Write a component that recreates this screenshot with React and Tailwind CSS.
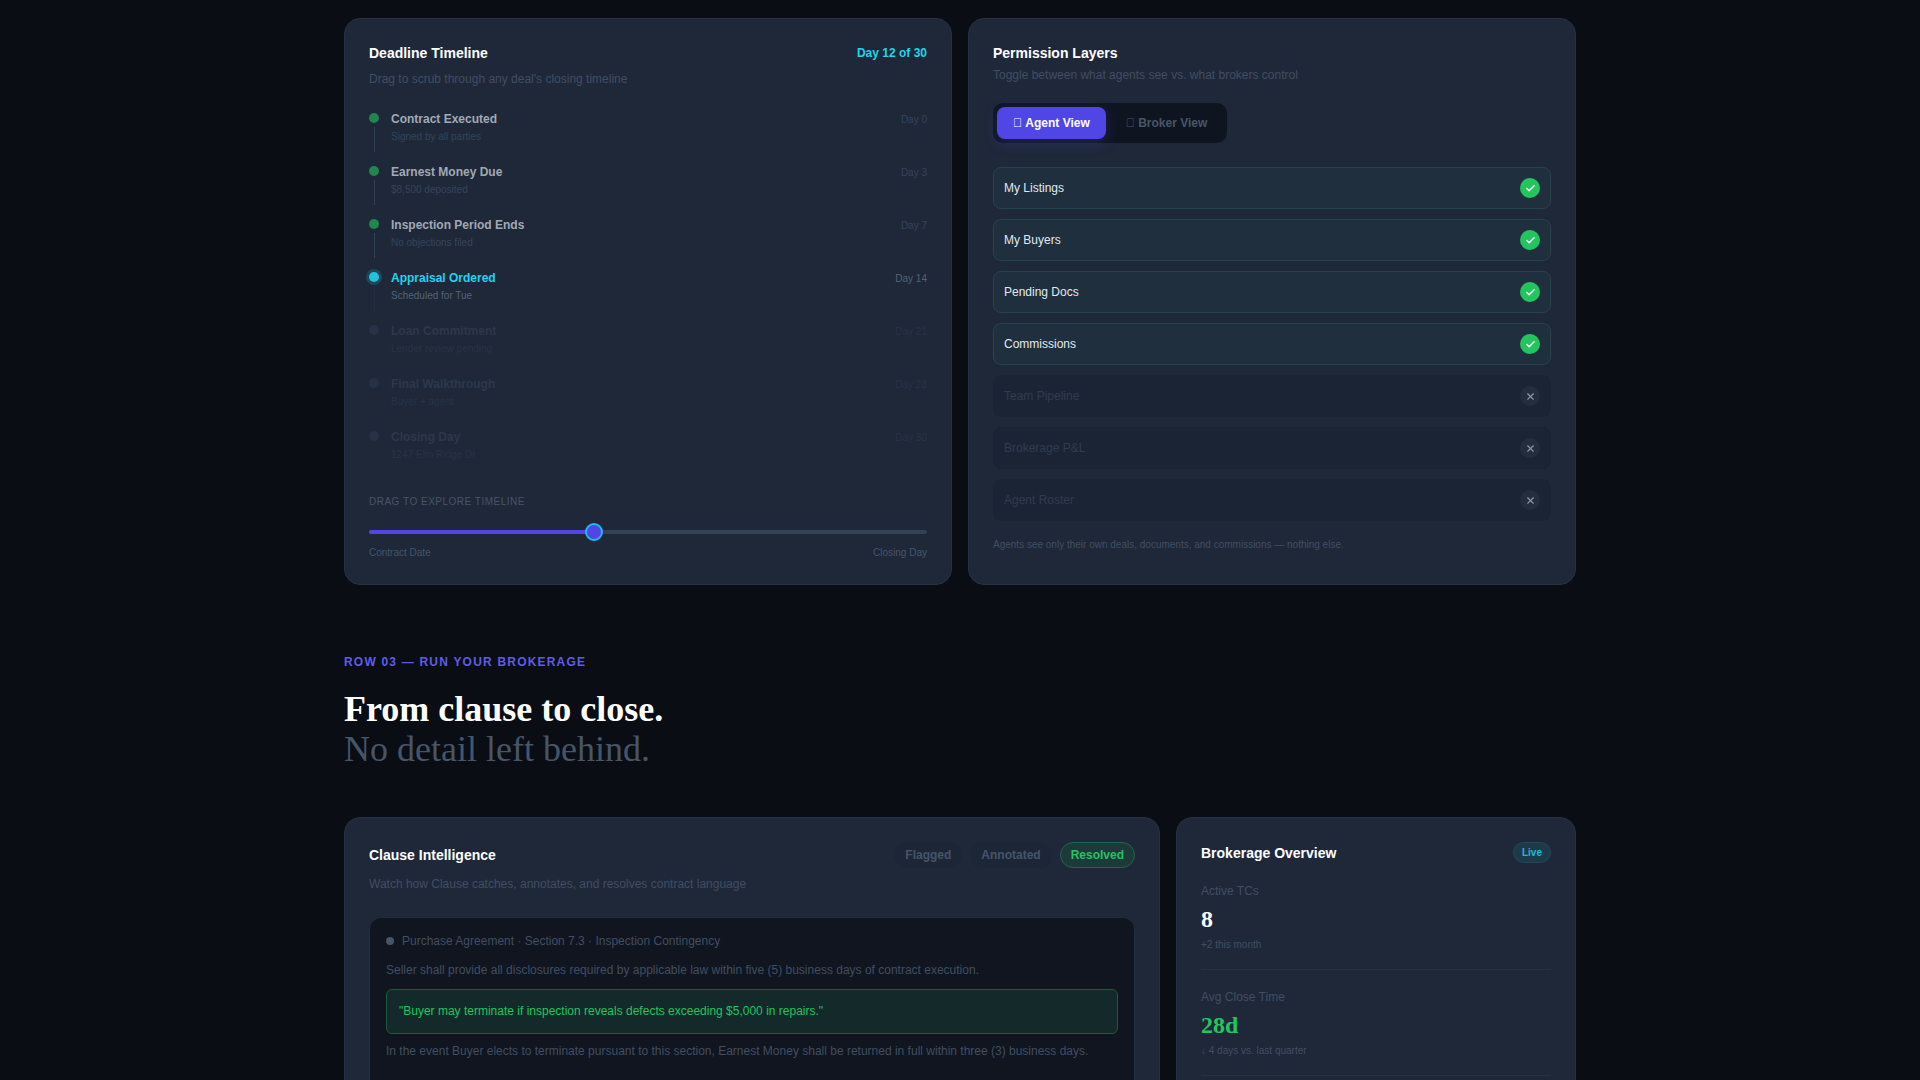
import React from 'react';
import { Check, X } from 'lucide-react';

const milestones = [
  { title: 'Contract Executed', sub: 'Signed by all parties', day: 'Day 0', state: 'done' },
  { title: 'Earnest Money Due', sub: '$8,500 deposited', day: 'Day 3', state: 'done' },
  { title: 'Inspection Period Ends', sub: 'No objections filed', day: 'Day 7', state: 'done' },
  { title: 'Appraisal Ordered', sub: 'Scheduled for Tue', day: 'Day 14', state: 'active' },
  { title: 'Loan Commitment', sub: 'Lender review pending', day: 'Day 21', state: 'todo' },
  { title: 'Final Walkthrough', sub: 'Buyer + agent', day: 'Day 28', state: 'todo' },
  { title: 'Closing Day', sub: '1247 Elm Ridge Dr', day: 'Day 30', state: 'todo', last: true },
];

const permissions = [
  { label: 'My Listings', on: true },
  { label: 'My Buyers', on: true },
  { label: 'Pending Docs', on: true },
  { label: 'Commissions', on: true },
  { label: 'Team Pipeline', on: false },
  { label: 'Brokerage P&L', on: false },
  { label: 'Agent Roster', on: false },
];

function Milestone({ item }) {
  const active = item.state === 'active';
  const done = item.state === 'done';
  return (
    <div className={`flex gap-3 ${item.last ? '' : 'pb-3'}`}>
      <div className="flex flex-col items-center w-2.5 pt-0.5 shrink-0">
        <div
          className={`w-2.5 h-2.5 rounded-full ${
            active
              ? 'bg-[#22d3ee] opacity-90 shadow-[0_0_0_3px_rgba(34,211,238,0.2)]'
              : done
              ? 'bg-[#22c55e] opacity-60'
              : 'bg-[#263246]'
          }`}
        />
        <div className={`w-px h-[25px] mt-1 ${done ? 'bg-[#334155]' : active ? 'bg-[#232e40]' : ''}`} />
      </div>
      <div className="flex-1 flex justify-between items-start">
        <div>
          <div className={`text-xs leading-4 font-semibold ${active ? 'text-[#22d3ee]' : done ? 'text-[#a1a9b5]' : 'text-[#2c384b]'}`}>
            {item.title}
          </div>
          <div className={`text-[10px] leading-[15px] mt-0.5 ${active ? 'text-[#556277]' : done ? 'text-[#364459]' : 'text-[#283345]'}`}>{item.sub}</div>
        </div>
        <div className={`text-[10px] leading-[17px] ${active ? 'text-[#556277]' : done ? 'text-[#364459]' : 'text-[#283345]'}`}>{item.day}</div>
      </div>
    </div>
  );
}

function PermissionRow({ label, on }) {
  return (
    <div
      className={`h-[42px] flex items-center justify-between px-[10px] rounded-lg border ${
        on ? 'bg-[#1f2f3d] border-[#264549]' : 'bg-[#1b2434] border-[#1b2434]'
      }`}
    >
      <span className={`text-xs ${on ? 'text-[#e2e8f0]' : 'text-[#303c50]'}`}>{label}</span>
      {on ? (
        <span className="w-5 h-5 rounded-full bg-[#22c55e] flex items-center justify-center">
          <Check size={11} strokeWidth={3} className="text-white" />
        </span>
      ) : (
        <span className="w-5 h-5 rounded-full bg-[#242d3e] flex items-center justify-center">
          <X size={11} strokeWidth={2.5} className="text-[#8a97a9]" />
        </span>
      )}
    </div>
  );
}

function Stat({ label, value, valueClass, note }) {
  return (
    <div className="pb-[17px] mb-[19px] border-b border-[#263142]">
      <div className="text-xs leading-4 text-[#414e63]">{label}</div>
      <div className={`text-2xl leading-8 font-bold mt-1 font-['Liberation_Serif',serif] ${valueClass}`}>{value}</div>
      <div className="text-[10px] leading-[15px] mt-0.5 text-[#414e63]">{note}</div>
    </div>
  );
}

export default function App() {
  return (
    <div className="h-screen overflow-hidden bg-[#0a0d14] font-['Liberation_Sans',Arial,sans-serif]">
      <div className="max-w-[1280px] mx-auto px-6 pt-[18px]">
        <div className="grid grid-cols-2 gap-4">
          {/* deadline timeline */}
          <div className="bg-[#1e2839] border border-[#273244] rounded-2xl p-6">
            <div className="flex justify-between items-center h-5">
              <h3 className="text-sm font-semibold text-white">Deadline Timeline</h3>
              <span className="text-xs font-semibold text-[#22d3ee]">Day 12 of 30</span>
            </div>
            <p className="text-xs leading-4 text-[#414e63] mt-2 mb-6">Drag to scrub through any deal's closing timeline</p>
            <div>
              {milestones.map((m) => (
                <Milestone key={m.title} item={m} />
              ))}
            </div>
            <div className="mt-6">
              <div className="text-[10px] leading-[15px] tracking-[0.05em] text-[#475569]">DRAG TO EXPLORE TIMELINE</div>
              <div className="relative h-1 rounded-full bg-[#334155] mt-[21px]">
                <div className="h-full w-[40%] rounded-full bg-[#4f46e5]" />
                <div className="absolute left-[calc(40%+2px)] top-1/2 -translate-x-1/2 -translate-y-1/2 w-[18px] h-[18px] rounded-full bg-[#4f46e5] border-2 border-[#22b8f0]" />
              </div>
              <div className="flex justify-between text-[10px] leading-[15px] text-[#475569] mt-[11px]">
                <span>Contract Date</span>
                <span>Closing Day</span>
              </div>
            </div>
          </div>

          {/* permission layers */}
          <div className="bg-[#1e2839] border border-[#273244] rounded-2xl p-6">
            <h3 className="text-sm leading-5 font-semibold text-white">Permission Layers</h3>
            <p className="text-xs leading-4 text-[#414e63] mt-1 mb-5">Toggle between what agents see vs. what brokers control</p>
            <div className="inline-flex gap-1 p-1 rounded-[10px] bg-[#0f1520] mb-6 align-top">
              <button className="px-4 h-8 rounded-lg bg-[#4f46e5] text-white text-xs font-semibold shadow-[0_4px_14px_rgba(79,70,229,0.25)]">{'\uE000'} Agent View</button>
              <button className="px-4 h-8 rounded-lg text-[#475569] text-xs font-semibold">{'\uE000'} Broker View</button>
            </div>
            <div className="flex flex-col gap-[10px]">
              {permissions.map((p) => (
                <PermissionRow key={p.label} label={p.label} on={p.on} />
              ))}
            </div>
            <p className="text-[10px] leading-[15px] text-[#414e63] mt-4">
              Agents see only their own deals, documents, and commissions — nothing else.
            </p>
          </div>
        </div>

        {/* section heading */}
        <div className="pt-[69px] mb-12">
          <div className="text-xs leading-4 font-semibold tracking-[0.1em] text-[#5f5ce8]">ROW 03 — RUN YOUR BROKERAGE</div>
          <h2 className="mt-[19px] text-4xl leading-10 font-bold text-white font-['Liberation_Serif',serif]">
            From clause to close.
            <br />
            <span className="font-normal text-[#475569]">No detail left behind.</span>
          </h2>
        </div>

        <div className="grid grid-cols-[1fr_400px] gap-4">
          {/* clause intelligence */}
          <div className="bg-[#1e2839] border border-[#273244] rounded-2xl p-6">
            <div className="flex justify-between items-center">
              <h3 className="text-sm font-semibold text-white">Clause Intelligence</h3>
              <div className="flex gap-2 text-xs font-semibold">
                <span className="h-[26px] px-[11px] flex items-center rounded-full bg-[#1c2637] text-[#475569]">Flagged</span>
                <span className="h-[26px] px-[11px] flex items-center rounded-full bg-[#1c2637] text-[#475569]">Annotated</span>
                <span className="h-[26px] px-[10px] flex items-center rounded-full border border-[#22654a] bg-[#1c3a3a] text-[#22c55e]">Resolved</span>
              </div>
            </div>
            <p className="text-xs leading-4 text-[#414e63] mt-2 mb-[25px]">Watch how Clause catches, annotates, and resolves contract language</p>
            <div className="rounded-xl bg-[#10151f] border border-[#212c3c] p-4 pb-12 text-xs leading-[1.6] text-[#414e63]">
              <div className="flex items-center gap-2 leading-[14px] mb-[13px]">
                <span className="w-2 h-2 rounded-full bg-[#475569]" />
                <span>Purchase Agreement · Section 7.3 · Inspection Contingency</span>
              </div>
              <p>Seller shall provide all disclosures required by applicable law within five (5) business days of contract execution.</p>
              <div className="mt-[9px] mb-2 p-3 rounded-md bg-[#13292a] border border-[#1d5a3f] text-[#22c55e]">
                "Buyer may terminate if inspection reveals defects exceeding $5,000 in repairs."
              </div>
              <p>In the event Buyer elects to terminate pursuant to this section, Earnest Money shall be returned in full within three (3) business days.</p>
            </div>
          </div>

          {/* brokerage overview */}
          <div className="bg-[#1e2839] border border-[#273244] rounded-2xl p-6">
            <div className="flex justify-between items-center mb-5">
              <h3 className="text-sm font-semibold text-white">Brokerage Overview</h3>
              <span className="h-[21px] px-2 flex items-center rounded-full border border-[#1f4a5c] bg-[#1c3a4a] text-[10px] font-semibold text-[#22b8d8]">Live</span>
            </div>
            <Stat label="Active TCs" value="8" valueClass="text-white" note="+2 this month" />
            <Stat label="Avg Close Time" value="28d" valueClass="text-[#22c55e]" note="↓ 4 days vs. last quarter" />
          </div>
        </div>
      </div>
    </div>
  );
}
